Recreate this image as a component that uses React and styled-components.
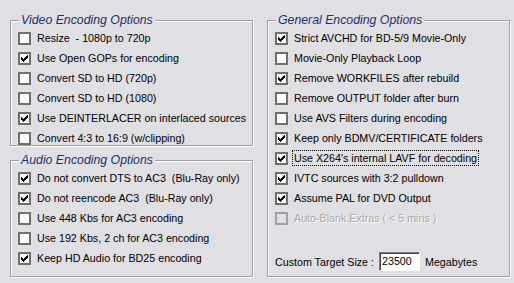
import styled, { createGlobalStyle } from "styled-components";

const GlobalStyle = createGlobalStyle`
  html, body {
    margin: 0;
    padding: 0;
    background: #e0dfe3;
  }
  body {
    font-family: "Liberation Sans", Arial, sans-serif;
    font-size: 10.7px;
    color: #000;
  }
`;

const Page = styled.div`
  width: 514px;
  height: 283px;
  box-sizing: border-box;
  padding: 20px 0 0 10px;
  display: flex;
  gap: 14px;
  background: #e0dfe3;
`;

const Column = styled.div`
  display: flex;
  flex-direction: column;
  gap: 14px;
  width: 243px;
`;

const GroupBox = styled.div`
  position: relative;
  box-sizing: border-box;
  height: ${(p) => p.$height}px;
  border: 1px solid #a0a0a0;
  box-shadow: inset 1px 1px 0 #fff, 1px 1px 0 #fff;
  padding: ${(p) => p.$padTop}px 6px 5px 7px;
  display: flex;
  flex-direction: column;
  gap: 4px;
`;

const Title = styled.span`
  position: absolute;
  top: -9px;
  left: 8px;
  padding: 0 2px;
  background: #e0dfe3;
  font-style: italic;
  font-size: 12.3px;
  line-height: 16px;
  color: #1f2f6e;
  white-space: nowrap;
`;

const Row = styled.div`
  display: flex;
  align-items: center;
  height: 16px;
  gap: 5px;
  white-space: nowrap;
  color: ${(p) => (p.$disabled ? "#a8a8a8" : "#000")};
  text-shadow: ${(p) => (p.$disabled ? "1px 1px 0 #fff" : "none")};
`;

const Box = styled.span`
  box-sizing: border-box;
  width: 13px;
  height: 13px;
  flex: none;
  display: flex;
  align-items: center;
  justify-content: center;
  border: 2px solid ${(p) => (p.$disabled ? "#a0a0a0" : "#6e6e6e")};
  background: ${(p) => (p.$disabled ? "#e0dfe3" : "#fff")};
`;

const Label = styled.span`
  padding: 0 1px;
  margin-left: -1px;
  line-height: 14px;
  white-space: pre;
  border: 1px dotted ${(p) => (p.$focus ? "#000" : "transparent")};
`;

const SizeRow = styled.div`
  margin-top: auto;
  display: flex;
  align-items: center;
  height: 19px;
  white-space: nowrap;
`;

const SizeInput = styled.span`
  box-sizing: border-box;
  width: 41px;
  height: 19px;
  margin: 0 5px 0 5px;
  padding: 1px 2px;
  background: #fff;
  border: 1px solid;
  border-color: #808080 #fff #fff #808080;
  box-shadow: inset 1px 1px 0 #404040;
  line-height: 15px;
`;

const Check = () => (
  <svg width="7" height="7" viewBox="0 0 7 7" shapeRendering="crispEdges">
    <path d="M0 2h1v1h1v1h1v-1h1v-1h1v-1h1v-1h1v3h-1v1h-1v1h-1v1h-1v1h-1v-1h-1v-1h-1z" fill="#000" />
  </svg>
);

const Option = ({ label, checked, disabled, focus }) => (
  <Row $disabled={disabled}>
    <Box $disabled={disabled}>{checked && <Check />}</Box>
    <Label $focus={focus}>{label}</Label>
  </Row>
);

const video = [
  ["Resize  - 1080p to 720p", false],
  ["Use Open GOPs for encoding", true],
  ["Convert SD to HD (720p)", false],
  ["Convert SD to HD (1080)", false],
  ["Use DEINTERLACER on interlaced sources", true],
  ["Convert 4:3 to 16:9 (w/clipping)", false],
];

const audio = [
  ["Do not convert DTS to AC3  (Blu-Ray only)", true],
  ["Do not reencode AC3  (Blu-Ray only)", true],
  ["Use 448 Kbs for AC3 encoding", false],
  ["Use 192 Kbs, 2 ch for AC3 encoding", false],
  ["Keep HD Audio for BD25 encoding", true],
];

const general = [
  ["Strict AVCHD for BD-5/9 Movie-Only", true],
  ["Movie-Only Playback Loop", false],
  ["Remove WORKFILES after rebuild", true],
  ["Remove OUTPUT folder after burn", false],
  ["Use AVS Filters during encoding", false],
  ["Keep only BDMV/CERTIFICATE folders", true],
  ["Use X264's internal LAVF for decoding", true, false, true],
  ["IVTC sources with 3:2 pulldown", true],
  ["Assume PAL for DVD Output", true],
  ["Auto-Blank Extras ( < 5 mins )", false, true],
];

export default function App() {
  return (
    <>
      <GlobalStyle />
      <Page>
        <Column>
          <GroupBox $height={126} $padTop={9}>
            <Title>Video Encoding Options</Title>
            {video.map(([l, c]) => (
              <Option key={l} label={l} checked={c} />
            ))}
          </GroupBox>
          <GroupBox $height={117} $padTop={9}>
            <Title>Audio Encoding Options</Title>
            {audio.map(([l, c]) => (
              <Option key={l} label={l} checked={c} />
            ))}
          </GroupBox>
        </Column>
        <Column>
          <GroupBox $height={257} $padTop={9}>
            <Title>General Encoding Options</Title>
            {general.map(([l, c, d, f]) => (
              <Option key={l} label={l} checked={c} disabled={d} focus={f} />
            ))}
            <SizeRow>
              Custom Target Size :
              <SizeInput>23500</SizeInput>
              Megabytes
            </SizeRow>
          </GroupBox>
        </Column>
      </Page>
    </>
  );
}
